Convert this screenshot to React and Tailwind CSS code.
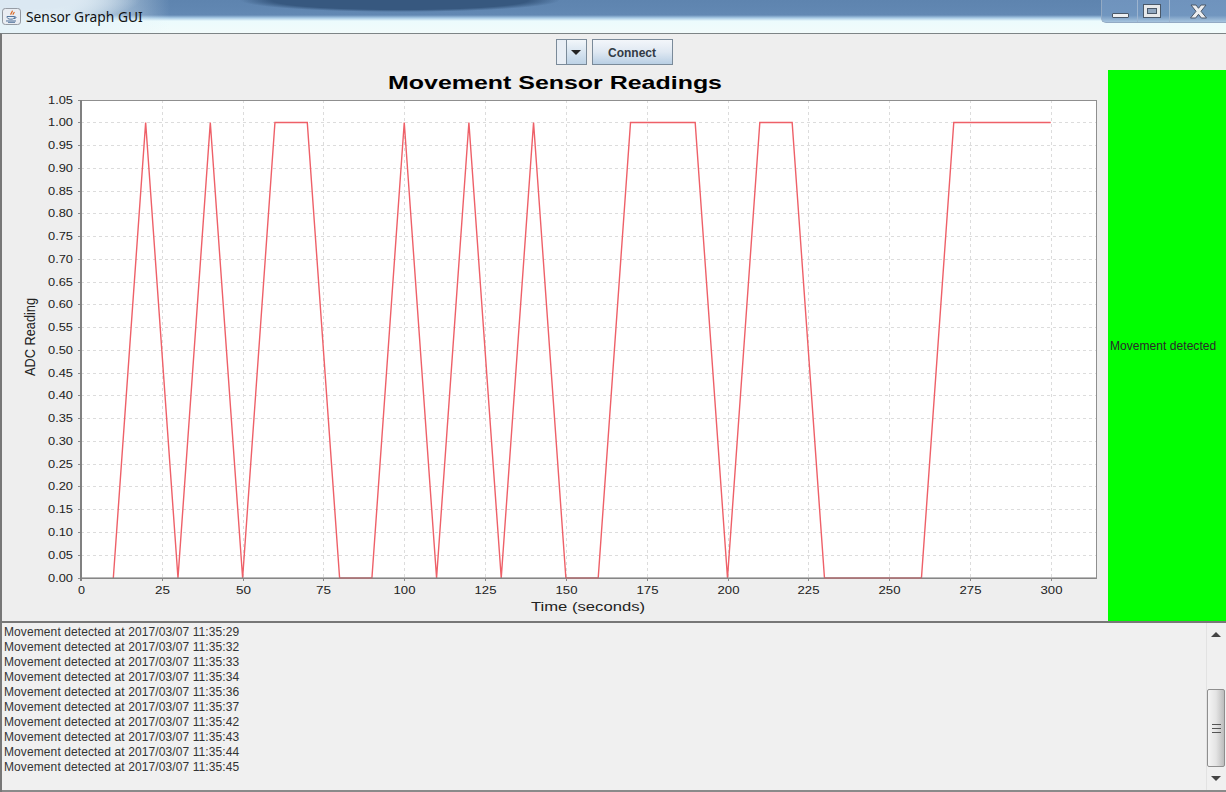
const LOG = ["11:35:29", "11:35:32", "11:35:33", "11:35:34", "11:35:36", "11:35:37", "11:35:42", "11:35:43", "11:35:44", "11:35:45"];

// [seconds, reading] as plotted
const POINTS = [
  [10, 0], [20, 1], [30, 0], [40, 1], [50, 0], [60, 1], [70, 1], [80, 0], [90, 0], [100, 1], [110, 0], [120, 1], [130, 0],
  [140, 1], [150, 0], [160, 0], [170, 1], [190, 1], [200, 0], [210, 1], [220, 1], [230, 0], [260, 0], [270, 1], [300, 1],
];

const PLOT = { left: 81, right: 1096, top: 100, bottom: 578 };
const sx = (v) => PLOT.left + v * 3.2325;
const sy = (v) => PLOT.bottom - (v / 1.05) * (PLOT.bottom - PLOT.top);
const Y_TICKS = Array.from({ length: 22 }, (_, i) => i * 0.05);
const X_TICKS = Array.from({ length: 13 }, (_, i) => i * 25);
const AXIS_FONT = "'Liberation Sans', Arial, sans-serif";

function Chart() {
  return (
    <svg viewBox="2 70 1106 551" className="block w-[1106px] h-[551px]" fontFamily={AXIS_FONT}>
      <text x="555" y="88.5" textAnchor="middle" fontSize="18" fontWeight="700" fill="#000" textLength="334" lengthAdjust="spacingAndGlyphs">Movement Sensor Readings</text>
      <rect x={PLOT.left} y={PLOT.top} width={PLOT.right - PLOT.left} height={PLOT.bottom - PLOT.top} fill="#fff" />
      {Y_TICKS.map((v) => {
        const y = Math.floor(sy(v)) + 0.5;
        const label = v.toFixed(2);
        return (
          <g key={label}>
            <line x1={PLOT.left} x2={PLOT.right} y1={y} y2={y} stroke="#dcdcdc" strokeDasharray="3 3" />
            <line x1={PLOT.left - 3} x2={PLOT.left} y1={y} y2={y} stroke="#8a8a8a" />
            <text x="73" y={y + 3.5} textAnchor="end" fontSize="10.5" fill="#222" textLength="25" lengthAdjust="spacingAndGlyphs">{label}</text>
          </g>
        );
      })}
      {X_TICKS.map((v) => {
        const x = Math.round(sx(v)) + 0.5;
        return (
          <g key={v}>
            <line x1={x} x2={x} y1={PLOT.top} y2={PLOT.bottom} stroke="#dcdcdc" strokeDasharray="3 3" />
            <line x1={x} x2={x} y1={PLOT.bottom} y2={PLOT.bottom + 3} stroke="#8a8a8a" />
            <text x={x} y="594" textAnchor="middle" fontSize="10.5" fill="#222" textLength={v === 0 ? 7 : v < 100 ? 15 : 22} lengthAdjust="spacingAndGlyphs">{v}</text>
          </g>
        );
      })}
      <rect x={PLOT.left + 0.5} y={PLOT.top + 0.5} width={PLOT.right - PLOT.left} height={PLOT.bottom - PLOT.top} fill="none" stroke="#8f8f8f" />
      <polyline points={POINTS.map(([a, b]) => `${sx(a)},${b ? 122.5 : 578}`).join(" ")} fill="none" stroke="#ee6068" strokeWidth="1.4" />
      <line x1={PLOT.left} x2={PLOT.left} y1={PLOT.top} y2={PLOT.bottom + 3} stroke="#808080" strokeWidth="2" />
      <line x1={PLOT.left} x2={PLOT.right} y1={PLOT.bottom} y2={PLOT.bottom} stroke="#808080" strokeWidth="2" strokeOpacity="0.55" />
      <text x="588" y="611" textAnchor="middle" fontSize="12" fill="#222" textLength="114" lengthAdjust="spacingAndGlyphs">Time (seconds)</text>
      <text transform="translate(34.5 337) rotate(-90)" textAnchor="middle" fontSize="15" fill="#222" textLength="78" lengthAdjust="spacingAndGlyphs">ADC Reading</text>
    </svg>
  );
}

function JavaIcon() {
  return (
    <svg width="19" height="17" viewBox="0 0 19 19" preserveAspectRatio="none" className="shrink-0">
      <rect x="0.5" y="0.5" width="18" height="18" rx="3" fill="#e9edf2" stroke="#8c9299" />
      <path d="M10 3c1.500 1.600-2.200 2.600-1 4.600M12 4.500c.8 1-1.400 1.600-.8 3" fill="none" stroke="#d9641e" strokeWidth="1.200" />
      <path d="M5 9.500h7.500c0 2-1 3-3.700 3S5 11.500 5 9.500zM12.500 10h1.300c.7 1-.4 1.800-1.800 1.800" fill="none" stroke="#4a6f98" strokeWidth="1" />
      <path d="M4 14.500h10M6 16h7" stroke="#4a6f98" strokeWidth="1" />
    </svg>
  );
}

function WindowButtons() {
  return (
    <div className="flex h-[23px] w-[125px] items-center self-start rounded-bl-[5px] border-b border-l border-[#93aac4] bg-[linear-gradient(to_bottom,#6f93bd,#7196bf_70%,#a6c4de)]">
      <div className="flex h-full w-[36px] items-center justify-center border-r border-[#9db4cf] pl-[1px] pt-[9px]">
        <div className="h-[5px] w-[17px] rounded-[1px] border border-[#4a5868] bg-[#eef0f2]" />
      </div>
      <div className="flex h-full w-[32px] items-center justify-center border-r border-[#9db4cf] pr-[3px]">
        <div className="flex h-[14px] w-[18px] items-center justify-center border border-[#4a5868] bg-[#e6e8ea]">
          <div className="h-[6px] w-[10px] border border-[#4a5868] bg-[#8fa6bf]" />
        </div>
      </div>
      <div className="flex flex-1 items-center justify-center">
        <svg width="17" height="15" viewBox="0 0 17 15">
          <path d="M1 1h5l2.500 3.300L11 1h5l-5 6.300L16.500 14h-5.200L8.500 10.300 5.700 14H.5L6 7.300z" fill="#eceef0" stroke="#4a5868" strokeWidth="1" />
        </svg>
      </div>
    </div>
  );
}

export default function App() {
  return (
    <div className="flex h-[792px] w-[1226px] flex-col overflow-hidden bg-[#eeeeee] font-['Liberation_Sans',Arial,sans-serif]">
      {/* aero glass title bar */}
      <div className="flex h-[33px] shrink-0 items-center justify-between bg-[radial-gradient(ellipse_160px_12px_at_400px_0px,#37587f_80%,transparent),radial-gradient(ellipse_110px_22px_at_30px_0px,#dbe8f2_40%,transparent),linear-gradient(to_right,#e6f3f8_0,#e6f3f8_60px,transparent_170px),linear-gradient(to_bottom,#5e84af_0,#6288b3_15px,#a9cbe6_18px,#ecfbfd_21px,#f2fbfb_33px)]">
        <div className="flex items-center gap-[5px] pl-[2px]">
          <JavaIcon />
          <span className="font-['Noto_Sans',sans-serif] text-[13.8px] leading-none text-[#111]">Sensor Graph GUI</span>
        </div>
        <WindowButtons />
      </div>

      <div className="flex flex-1 flex-col border-l-2 border-t border-l-[#777777] border-t-[#7d8486]">
        <div className="flex h-[36px] shrink-0 items-center justify-center gap-[5px]">
          <div className="flex h-[26px] w-[31px] border border-[#7a8a99] bg-[#dfe8f1]">
            <div className="w-[10px] border-r border-[#7a8a99] bg-[#e8eef5]" />
            <div className="flex flex-1 items-center justify-center bg-[linear-gradient(to_bottom,#f2f6fa,#bdd2e6)]">
              <div className="h-0 w-0 border-x-[5px] border-t-[5px] border-x-transparent border-t-[#222]" />
            </div>
          </div>
          <button className="h-[26px] w-[81px] border border-[#7a8a99] bg-[linear-gradient(to_bottom,#f3f6fa,#dfe8f2_50%,#b9cfe4)] pt-[1px] text-[12px] font-bold text-[#333b45]">Connect</button>
        </div>

        <div className="flex h-[551px] shrink-0">
          <Chart />
          <div className="flex w-[118px] items-center whitespace-nowrap bg-[#00ff00] pl-[2px] text-[12px] tracking-[0.05px] text-[#2a2a2a]">Movement detected</div>
        </div>

        <div className="flex flex-1 border-y-2 border-t-[#777777] border-b-[#8a8a8a] bg-[#f0f0f0]">
          <div className="flex-1 pl-[2px] pt-[2px] text-[12px] leading-[15px] tracking-[0.1px] text-[#333333]">
            {LOG.map((t) => <div key={t}>Movement detected at 2017/03/07 {t}</div>)}
          </div>
          <div className="flex w-[20px] flex-col border-l border-[#e2e2e2] pr-[1px]">
            <div className="flex h-[22px] items-center justify-center">
              <div className="h-0 w-0 border-x-[5px] border-b-[5px] border-x-transparent border-b-[#444]" />
            </div>
            <div className="h-[44px]" />
            <div className="flex h-[78px] items-center justify-center rounded-[2px] border border-[#8e8e8e] bg-[linear-gradient(to_right,#f4f4f4,#e4e4e4_50%,#bcbcbc)]">
              <div className="flex w-[9px] flex-col gap-[3px]">
                <div className="h-px bg-[#555]" />
                <div className="h-px bg-[#555]" />
                <div className="h-px bg-[#555]" />
              </div>
            </div>
            <div className="flex flex-1 items-center justify-center">
              <div className="h-0 w-0 border-x-[5px] border-t-[5px] border-x-transparent border-t-[#444]" />
            </div>
          </div>
        </div>
      </div>
    </div>
  );
}
